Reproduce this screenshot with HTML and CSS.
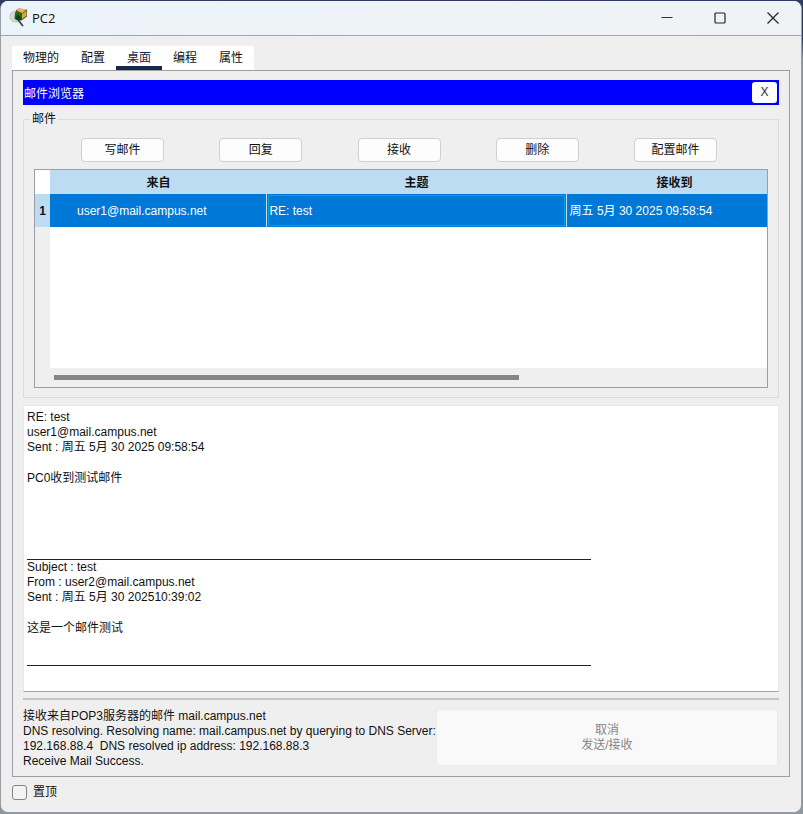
FILE: index.html
```
<!DOCTYPE html>
<html lang="zh-CN">
<head>
<meta charset="utf-8">
<title>PC2</title>
<link rel="stylesheet" href="styles.css">
</head>
<body>
<div class="window">
  <header class="titlebar">
    <svg class="app-icon" width="20" height="20" viewBox="0 0 20 20" aria-hidden="true">
      <ellipse cx="6.500" cy="8.500" rx="5.500" ry="5.500" fill="#d5dcd8" stroke="#b5beb9"/>
      <path d="M7 2l3-1.500 8 1v7l-5.500 4-5.500-2z" fill="#6b5320"/>
      <path d="M7 2l3-1.500 8 1-5 3.500z" fill="#e5b94f"/>
      <path d="M13 6l4.500-3v4.500l-4.500 3.500z" fill="#d9a948"/>
      <path d="M6 4l7 2v6L9.500 13l-4-2z" fill="#176b20"/>
      <path d="M9 6l-2.500 4 3 3 3-2z" fill="#0c4415"/>
      <path d="M10 13l3.500 4.500" stroke="#454b48" stroke-width="2" stroke-linecap="round"/>
    </svg>
    <h1 class="title">PC2</h1>
    <div class="window-controls">
      <button class="window-button" aria-label="最小化"><svg width="12" height="12" viewBox="0 0 12 12"><path d="M0.500 5.500h11" stroke="#333" fill="none"/></svg></button>
      <button class="window-button" aria-label="最大化"><svg width="12" height="12" viewBox="0 0 12 12"><rect x="1" y="1" width="10" height="10" rx="1" stroke="#222" stroke-width="1.200" fill="none"/></svg></button>
      <button class="window-button" aria-label="关闭"><svg width="12" height="12" viewBox="0 0 12 12"><path d="M0.500 0.500l11 11M11.500 0.500l-11 11" stroke="#222" stroke-width="1.200" fill="none"/></svg></button>
    </div>
  </header>

  <main class="content">
    <nav class="tabs">
      <button class="tab">物理的</button>
      <button class="tab">配置</button>
      <button class="tab tab-active">桌面</button>
      <button class="tab">编程</button>
      <button class="tab">属性</button>
    </nav>

    <section class="panel">
      <div class="app-bar">
        <h2 class="app-title">邮件浏览器</h2>
        <button class="app-close">X</button>
      </div>

      <fieldset class="mails">
        <legend class="mails-legend">邮件</legend>
        <div class="toolbar">
          <button class="tool">写邮件</button>
          <button class="tool">回复</button>
          <button class="tool">接收</button>
          <button class="tool">删除</button>
          <button class="tool">配置邮件</button>
        </div>
        <div class="mail-view">
          <div class="mail-rows">
            <table class="mail-table">
              <colgroup><col class="col-index"><col class="col-from"><col class="col-subject"><col></colgroup>
              <thead>
                <tr><td class="corner"></td><th>来自</th><th>主题</th><th>接收到</th></tr>
              </thead>
              <tbody>
                <tr><th class="row-index">1</th><td class="cell-from">user1@mail.campus.net</td><td class="cell-focus">RE: test</td><td>周五 5月 30 2025 09:58:54</td></tr>
              </tbody>
            </table>
          </div>
          <div class="scrollbar"><div class="thumb"></div></div>
        </div>
      </fieldset>

      <article class="message">
        <p>RE: test<br>user1@mail.campus.net<br>Sent : 周五 5月 30 2025 09:58:54</p>
        <p class="reply">PC0收到测试邮件</p>
        <hr class="rule">
        <p>Subject : test<br>From : user2@mail.campus.net<br>Sent : 周五 5月 30 202510:39:02</p>
        <p class="original">这是一个邮件测试</p>
        <hr class="rule">
      </article>

      <footer class="status">
        <p class="log">接收来自POP3服务器的邮件 mail.campus.net<br>DNS resolving. Resolving name: mail.campus.net by querying to DNS Server:<br>192.168.88.4&nbsp; DNS resolved ip address: 192.168.88.3<br>Receive Mail Success.</p>
        <button class="cancel" disabled>取消<br>发送/接收</button>
      </footer>
    </section>

    <label class="on-top"><input class="check" type="checkbox">置顶</label>
  </main>
</div>
</body>
</html>
```
FILE: styles.css
```
* {
  box-sizing: border-box;
}

body {
  margin: 0;
  min-height: 100vh;
  padding: 1px 1px 1px 0;
  display: flex;
  background: linear-gradient(#2d3c60 0, #2d3c60 40px, #8c9399 60px, #8f969c 100%);
  color: #111;
  font: 12px/15px "Liberation Sans", "Noto Sans CJK SC", sans-serif;
}

button {
  font: inherit;
  color: inherit;
  padding: 0;
  border: 0;
  background: none;
}

p,
h1,
h2 {
  margin: 0;
  font-weight: normal;
}

.window {
  flex: 1;
  min-width: 0;
  display: flex;
  flex-direction: column;
  background: #efefef;
  border: 1px solid #9a9da3;
  border-top: 0;
  border-radius: 8px;
  overflow: hidden;
}

.titlebar {
  display: flex;
  align-items: center;
  height: 35px;
  padding: 0 2px 0 8px;
  background: linear-gradient(90deg, #ebf4fb, #f0f3f5);
  border-bottom: 1px solid #a3a5aa;
}

.title {
  flex: 1;
  padding-left: 3px;
  font: 13px/20px "Open Sans", "Noto Sans", sans-serif;
}

.window-controls {
  display: flex;
}

.window-button {
  width: 53px;
  height: 34px;
  display: grid;
  place-items: center;
}

.content {
  flex: 1;
  display: flex;
  flex-direction: column;
  align-items: stretch;
  padding: 10px 11px 12px;
}

.tabs {
  display: flex;
  align-self: flex-start;
  background: #fff;
}

.tab {
  height: 24px;
  padding: 4px 11px 0;
  border-bottom: 4px solid transparent;
}

.tab-active {
  color: #14284b;
  border-bottom-color: #14284b;
}

.panel {
  flex: 1;
  display: flex;
  flex-direction: column;
  padding: 9px 10px 7px;
  border: 1px solid #9b9ea5;
}

.app-bar {
  display: flex;
  align-items: center;
  justify-content: space-between;
  height: 25px;
  padding: 0 2px 0 1px;
  background: #00f;
  color: #fff;
}

.app-title {
  padding-top: 3px;
  font-size: 12px;
}

.app-close {
  width: 25px;
  height: 21px;
  border-radius: 3px;
  background: #fdfdfd;
  color: #333;
}

.mails {
  margin: 7px 0;
  padding: 11px 10px 9px;
  min-width: 0;
  border: 1px solid #dcdcdc;
}

.mails-legend {
  margin-left: -4px;
  padding: 0 2px;
}

.toolbar {
  display: flex;
  justify-content: space-between;
  margin: 0 51px 7px 47px;
}

.tool {
  width: 83px;
  height: 24px;
  border: 1px solid #d0d0d0;
  border-radius: 4px;
  background: #fdfdfd;
}

.mail-view {
  border: 1px solid #9b9ea5;
}

.mail-rows {
  height: 198px;
  overflow: hidden;
  background: linear-gradient(90deg, #efefef 15px, #fff 15px);
}

.mail-table {
  width: calc(100% + 16px);
  table-layout: fixed;
  border-collapse: collapse;
}

.col-index {
  width: 15px;
}

.col-from {
  width: 29%;
}

.col-subject {
  width: 40%;
}

.mail-table th {
  height: 24px;
  padding: 2px 0 0;
  background: #bcdcf4;
}

.mail-table .corner {
  height: 24px;
  background: #fff;
  border: 0;
}

.mail-table td {
  height: 33px;
  padding: 1px 3px 0;
  background: #0078d7;
  color: #fff;
  border-left: 1px solid #c9dbe9;
}

.mail-table .cell-from {
  padding-left: 27px;
  border-left: 0;
}

.mail-table .cell-focus {
  padding-left: 2px;
  outline: 1px solid #00a2e8;
  outline-offset: -2px;
}

.scrollbar {
  padding: 7px 19px;
  background: #efefef;
}

.thumb {
  width: 67%;
  height: 5px;
  background: #868686;
}

.message {
  flex: 1;
  padding: 4px 3px;
  background: #fff;
  border: 1px solid #e8e8e8;
  border-bottom-color: #a5a5a5;
}

.reply {
  padding: 16px 0 73px;
}

.original {
  padding: 16px 0 29px;
}

.rule {
  width: 564px;
  max-width: 100%;
  margin: 0;
  border: 0;
  border-top: 1px solid #222;
}

.status {
  display: flex;
  gap: 4px;
  margin-top: 6px;
  padding: 9px 1px 0 0;
  border-top: 2px solid #c4c4c4;
}

.log {
  flex: 410;
  min-width: 0;
  white-space: nowrap;
}

.cancel {
  flex: 341;
  height: 57px;
  border: 1px solid #ebebeb;
  border-radius: 4px;
  background: #f9f9f9;
  color: #858585;
}

.on-top {
  display: flex;
  align-items: center;
  align-self: flex-start;
  gap: 6px;
  margin-top: 8px;
}

.check {
  appearance: none;
  width: 15px;
  height: 15px;
  margin: 0;
  border: 1px solid #858585;
  border-radius: 3px;
  background: #f3f3f3;
}
```
